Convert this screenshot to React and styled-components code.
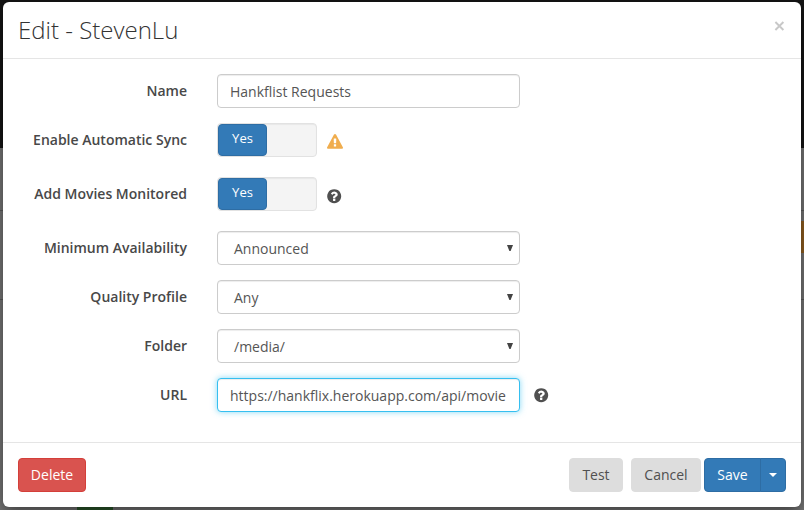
import React from "react";
import styled, { createGlobalStyle, css } from "styled-components";

const GlobalStyle = createGlobalStyle`
  * { box-sizing: border-box; }
  body {
    margin: 0;
    font: 14px/20px "Open Sans", sans-serif;
    color: #595959;
  }
`;

const Page = styled.div`
  position: relative;
  width: 804px;
  height: 510px;
  padding: 2px 3px 3px;
  overflow: hidden;
  background:
    linear-gradient(#5c5c5c, #5c5c5c) 0 210px / 100% 1px no-repeat,
    linear-gradient(#5c5c5c, #5c5c5c) 0 299px / 100% 1px no-repeat,
    linear-gradient(#151515 148px, #787878 148px);
`;

const Poster = styled.div`
  position: absolute;
  right: 0;
  top: 221px;
  width: 16px;
  height: 32px;
  background: #936020;
`;

const StatusBadge = styled.div`
  position: absolute;
  left: 77px;
  bottom: 0;
  width: 36px;
  height: 12px;
  background: #2c5a2c;
`;

const Modal = styled.section`
  position: relative;
  display: flex;
  flex-direction: column;
  height: 505px;
  background: #fff;
  border-radius: 6px;
  box-shadow: 0 5px 15px rgba(0, 0, 0, 0.5);
`;

const Header = styled.header`
  display: flex;
  justify-content: space-between;
  height: 57px;
  padding: 11px 15px 0;
  border-bottom: 1px solid #e5e5e5;
`;

const Title = styled.h3`
  margin: 0;
  font-size: 24px;
  font-weight: 300;
  line-height: 33px;
  color: #333;
`;

const CloseButton = styled.button`
  align-self: flex-start;
  margin-top: 8px;
  padding: 0;
  border: 0;
  background: none;
  color: #c8c8c8;
  line-height: 0;
`;

const Body = styled.form`
  display: flex;
  flex-direction: column;
  flex: 1;
  gap: 15px;
  padding-top: 15px;
`;

const Row = styled.div`
  display: grid;
  grid-template-columns: 184px 303px auto;
  column-gap: 30px;
  height: ${(p) => (p.$tall ? 39 : 34)}px;
`;

const Label = styled.label`
  padding-top: 7px;
  text-align: right;
  font-weight: 600;
  color: #484848;
`;

const fieldBox = css`
  display: flex;
  align-items: center;
  width: 100%;
  height: 34px;
  border: 1px solid #ccc;
  border-radius: 4px;
  background: #fff;
  box-shadow: inset 0 1px 1px rgba(0, 0, 0, 0.075);
  font: inherit;
  color: #555;
`;

const Input = styled.input`
  ${fieldBox}
  padding: 0 12px;
  outline: 0;
  ${(p) =>
    p.$active &&
    css`
      border-color: #35bff0;
      box-shadow: inset 0 1px 1px rgba(0, 0, 0, 0.075), 0 0 6px rgba(53, 191, 240, 0.6);
    `}
`;

const SelectBox = styled.div`
  ${fieldBox}
  justify-content: space-between;
  padding: 2px 6px 0 16px;

  svg { margin-top: -3px; }
`;

const ToggleCell = styled.div`
  display: flex;
  gap: 10px;
`;

const Toggle = styled.div`
  width: 100px;
  height: 34px;
  border: 1px solid #e2e2e2;
  border-radius: 4px;
  background: #f4f4f4;
  box-shadow: inset 0 1px 1px rgba(0, 0, 0, 0.05);
`;

const ToggleOn = styled.div`
  width: 49px;
  height: 32px;
  border: 1px solid #2e6da4;
  border-radius: 4px;
  background: #337ab7;
  color: #fff;
  font-size: 13px;
  line-height: 26px;
  text-align: center;
`;

const Hint = styled.span`
  margin-top: ${(p) => p.$top}px;
  margin-left: ${(p) => p.$left || 0}px;
  height: 16px;
  line-height: 0;
  color: ${(p) => p.$color || "#505050"};
`;

const Footer = styled.footer`
  display: flex;
  height: 65px;
  padding: 15px;
  border-top: 1px solid #e5e5e5;
`;

const tones = {
  danger: ["#d9534f", "#d43f3a", "#fff"],
  plain: ["#ddd", "#ddd", "#505050"],
  primary: ["#337ab7", "#2e6da4", "#fff"],
};

const Button = styled.button`
  display: flex;
  align-items: center;
  justify-content: center;
  width: ${(p) => p.$width}px;
  height: 34px;
  padding: 0;
  border: 1px solid ${(p) => tones[p.$tone][1]};
  border-radius: 4px;
  background: ${(p) => tones[p.$tone][0]};
  color: ${(p) => tones[p.$tone][2]};
  font: inherit;
`;

const Actions = styled.div`
  display: flex;
  margin-left: auto;

  ${Button} + ${Button} { margin-left: 8px; }
`;

const SplitButton = styled.div`
  display: flex;
  margin-left: 3px;

  ${Button}:first-child { border-radius: 4px 0 0 4px; }
  ${Button} + ${Button} {
    margin-left: -1px;
    border-radius: 0 4px 4px 0;
  }
`;

const QuestionIcon = () => (
  <svg width="16.4" height="16.4" viewBox="0 0 1792 1792" fill="currentColor">
    <path d="M1024 1376v-192q0-14-9-23t-23-9h-192q-14 0-23 9t-9 23v192q0 14 9 23t23 9h192q14 0 23-9t9-23zm256-672q0-88-55.5-163t-138.5-116-170-41q-243 0-371 213-15 24 8 42l132 100q7 6 19 6 16 0 25-12 53-68 86-92 34-24 86-24 48 0 85.5 26t37.5 59q0 38-20 61t-68 45q-63 28-115.5 86.5t-52.5 125.5v36q0 14 9 23t23 9h192q14 0 23-9t9-23q0-19 21.5-49.5t54.5-49.5q32-18 49-28.5t46-35 44.5-48 28-60.5 12.5-81zm384 192q0 209-103 385.5t-279.5 279.5-385.5 103-385.5-103-279.5-279.5-103-385.5 103-385.5 279.5-279.5 385.5-103 385.5 103 279.5 279.5 103 385.5z" />
  </svg>
);

const WarningIcon = () => (
  <svg width="16" height="16" viewBox="0 0 1792 1792" fill="currentColor">
    <path d="M1024 1375v-190q0-14-9.5-23.5t-22.5-9.5h-192q-13 0-22.5 9.5t-9.5 23.5v190q0 14 9.5 23.5t22.5 9.5h192q13 0 22.5-9.5t9.5-23.5zm-2-374l18-459q0-12-10-19-13-11-24-11h-220q-11 0-24 11-10 7-10 21l17 457q0 10 10 16.5t24 6.5h185q14 0 23.5-6.5t10.5-16.5zm-14-934l768 1408q35 63-2 126-17 29-46.5 46t-63.5 17h-1536q-34 0-63.5-17t-46.5-46q-37-63-2-126l768-1408q17-31 47-49t65-18 65 18 47 49z" />
  </svg>
);

const Select = ({ value }) => (
  <SelectBox>
    {value}
    <svg width="6" height="6" viewBox="0 0 6 6" fill="#444">
      <path d="M0 0h6L3.6 6H2.4z" />
    </svg>
  </SelectBox>
);

const selects = [
  ["Minimum Availability", "Announced"],
  ["Quality Profile", "Any"],
  ["Folder", "/media/"],
];

export default function App() {
  return (
    <>
      <GlobalStyle />
      <Page>
        <Poster />
        <StatusBadge />
        <Modal>
          <Header>
            <Title>Edit - StevenLu</Title>
            <CloseButton aria-label="Close">
              <svg width="13" height="10" viewBox="0 0 13 10" stroke="currentColor" strokeWidth="1.9">
                <path d="M2.4 1l8 8M10.4 1l-8 8" />
              </svg>
            </CloseButton>
          </Header>
          <Body>
            <Row>
              <Label>Name</Label>
              <Input readOnly value="Hankflist Requests" />
            </Row>
            <Row $tall>
              <Label>Enable Automatic Sync</Label>
              <ToggleCell>
                <Toggle><ToggleOn>Yes</ToggleOn></Toggle>
                <Hint $top={11} $color="#f0ad4e"><WarningIcon /></Hint>
              </ToggleCell>
            </Row>
            <Row $tall>
              <Label>Add Movies Monitored</Label>
              <ToggleCell>
                <Toggle><ToggleOn>Yes</ToggleOn></Toggle>
                <Hint $top={11} $left={-1}><QuestionIcon /></Hint>
              </ToggleCell>
            </Row>
            {selects.map(([label, value]) => (
              <Row key={label}>
                <Label>{label}</Label>
                <Select value={value} />
              </Row>
            ))}
            <Row>
              <Label>URL</Label>
              <Input $active readOnly value="https://hankflix.herokuapp.com/api/movie" />
              <Hint $top={9} $left={-17}><QuestionIcon /></Hint>
            </Row>
          </Body>
          <Footer>
            <Button $tone="danger" $width={68}>Delete</Button>
            <Actions>
              <Button $tone="plain" $width={54}>Test</Button>
              <Button $tone="plain" $width={70}>Cancel</Button>
              <SplitButton>
                <Button $tone="primary" $width={57}>Save</Button>
                <Button $tone="primary" $width={26} aria-label="More save options">
                  <svg width="8" height="4" viewBox="0 0 8 4" fill="currentColor">
                    <path d="M0 0h8L4 4z" />
                  </svg>
                </Button>
              </SplitButton>
            </Actions>
          </Footer>
        </Modal>
      </Page>
    </>
  );
}
